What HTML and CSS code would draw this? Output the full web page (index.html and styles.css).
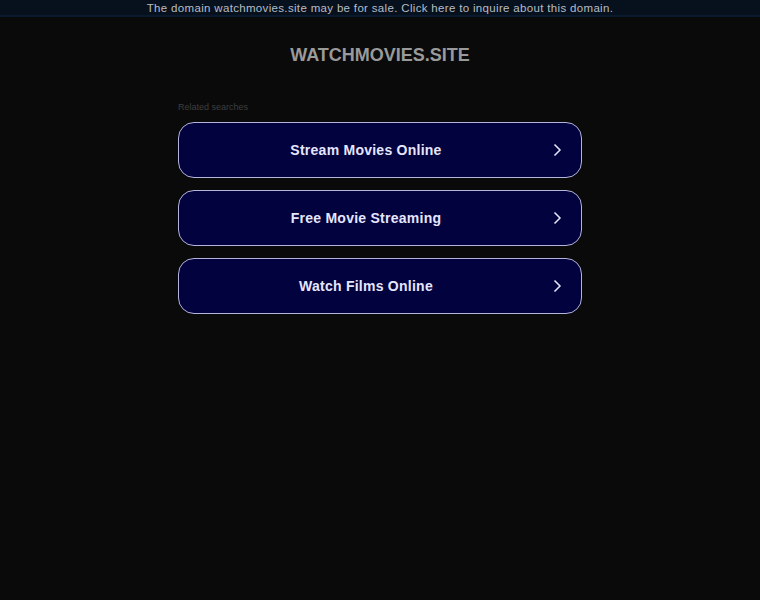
FILE: index.html
```html
<!DOCTYPE html>
<html>
<head>
<meta charset="utf-8">
<link rel="stylesheet" href="styles.css">
</head>
<body>
<div class="topbar">The domain watchmovies.site may be for sale. Click here to inquire about this domain.</div>
<h1 class="title">WATCHMOVIES.SITE</h1>
<div class="content">
  <div class="related">Related searches</div>
  <div class="links">
    <a class="link">Stream Movies Online<svg class="chev" viewBox="0 0 10 14" width="10" height="14"><path d="M2.5 1.5 L8 7 L2.5 12.5" fill="none" stroke="#e6e6ff" stroke-width="1.5"/></svg></a>
    <a class="link">Free Movie Streaming<svg class="chev" viewBox="0 0 10 14" width="10" height="14"><path d="M2.5 1.5 L8 7 L2.5 12.5" fill="none" stroke="#e6e6ff" stroke-width="1.5"/></svg></a>
    <a class="link">Watch Films Online<svg class="chev" viewBox="0 0 10 14" width="10" height="14"><path d="M2.5 1.5 L8 7 L2.5 12.5" fill="none" stroke="#e6e6ff" stroke-width="1.5"/></svg></a>
  </div>
</div>
</body>
</html>
```
FILE: styles.css
```css
html, body {
  margin: 0;
  padding: 0;
  background: #0a0a0a;
  font-family: "Liberation Sans", Arial, sans-serif;
}
.topbar {
  height: 14px;
  padding-top: 1px;
  line-height: 15px;
  background: #07111d;
  color: #b8bcc4;
  font-size: 11.5px;
  letter-spacing: 0.33px;
  text-align: center;
  border-bottom: 2px solid #0a1a2e;
}
.title {
  margin: 27px 0 0;
  text-align: center;
  font-size: 18px;
  font-weight: bold;
  color: #9a9a9a;
  line-height: 22px;
}
.content {
  width: 404px;
  margin: 35px auto 0;
}
.related {
  font-size: 9px;
  color: #3e3e3e;
  line-height: 12px;
  margin-bottom: 9px;
}
.links {
  display: flex;
  flex-direction: column;
  gap: 12px;
}
.link {
  position: relative;
  display: flex;
  align-items: center;
  justify-content: center;
  box-sizing: border-box;
  height: 56px;
  padding-right: 28px;
  border: 1px solid #b4b4dc;
  border-radius: 16px;
  background: #02023e;
  color: #e6e6ff;
  font-size: 14px;
  font-weight: bold;
  letter-spacing: 0.25px;
}
.chev {
  position: absolute;
  right: 19px;
  top: 20px;
}
```
